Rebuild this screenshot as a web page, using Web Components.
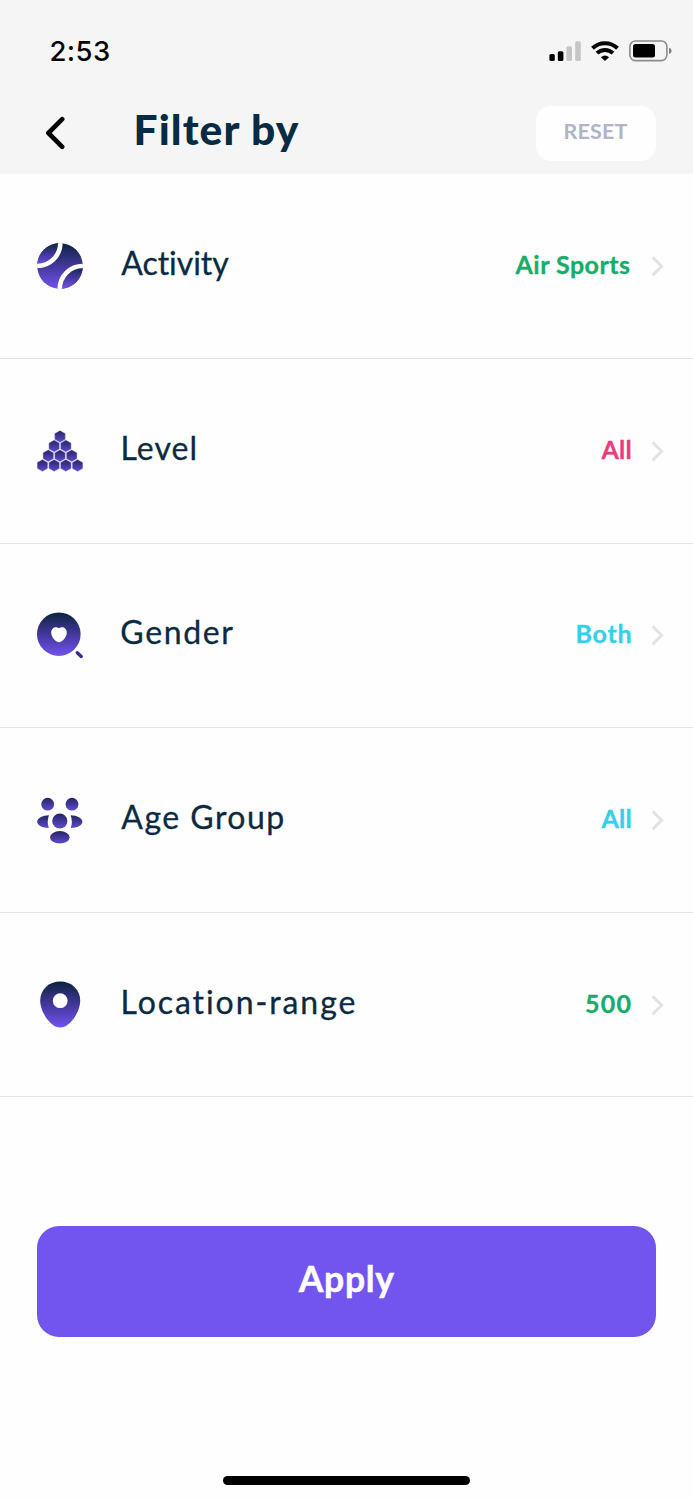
<!DOCTYPE html>
<html lang="en">
<head>
<meta charset="utf-8">
<title>Filter by</title>
<style>
  body {
    margin: 0;
    background: #fefefe;
    font-family: Lato, "Liberation Sans", sans-serif;
    color: #0b2a41;
  }
</style>
</head>
<body>
<filter-screen></filter-screen>

<script>
// Text tracked out to a given width, without side bearings
class FitText extends HTMLElement {
  constructor() {
    super();
    this.attachShadow({ mode: "open" });
    this.shadowRoot.innerHTML = `
    <style>
    :host { display: block; flex: none; white-space: nowrap; }
    span { display: block; }
    </style>
    <span><slot></slot></span>
    `;
  }

  connectedCallback() {
    const text = this.textContent;
    const target = parseFloat(this.getAttribute("width"));
    const style = getComputedStyle(this);
    const ctx = document.createElement("canvas").getContext("2d");
    ctx.font = `${style.fontWeight} ${style.fontSize} ${style.fontFamily}`;
    const m = ctx.measureText(text);
    const ink = m.actualBoundingBoxLeft + m.actualBoundingBoxRight;
    const span = this.shadowRoot.querySelector("span");
    span.style.letterSpacing = (target - ink) / (text.length - 1) + "px";
    span.style.marginLeft = m.actualBoundingBoxLeft + "px";
    this.style.width = target + "px";
  }
}

class StatusBar extends HTMLElement {
  constructor() {
    super();
    this.attachShadow({ mode: "open" });
    this.shadowRoot.innerHTML = `
    <style>
    :host {
      display: flex;
      align-items: center;
      justify-content: space-between;
      height: 102px;
      padding: 0 21px 0 50.5px;
      box-sizing: border-box;
      color: #050505;
    }
    fit-text { font: 500 27.5px/34px Inter, sans-serif; }
    .icons { display: flex; align-items: center; gap: 10px; }
    svg { display: block; }
    </style>
    <fit-text width="58.5">2:53</fit-text>
    <div class="icons">
      <svg width="32" height="20" viewBox="0 0 32 20">
        <rect x="0.4" y="13" width="5.4" height="7" rx="1.5"/>
        <rect x="8.8" y="10.3" width="5.6" height="9.7" rx="1.5"/>
        <rect x="17.4" y="5.2" width="5.6" height="14.8" rx="1.5" fill="#c6c6c6"/>
        <rect x="26.2" y="0.2" width="5.6" height="19.8" rx="1.5" fill="#c6c6c6"/>
      </svg>
      <svg width="28" height="20" viewBox="0 0 28 20" fill="none" stroke="#050505" stroke-width="4">
        <path d="M1.5 7.2A18 18 0 0 1 26.5 7.2"/>
        <path d="M6 12.2A11.4 11.4 0 0 1 22 12.2"/>
        <path d="M14 20L9.9 16.2A6.3 6.3 0 0 1 18.1 16.2Z" fill="#050505" stroke="none"/>
      </svg>
      <svg width="43" height="22" viewBox="0 0 43 22">
        <rect x="0.9" y="1" width="37" height="19.6" rx="5.5" fill="none" stroke="#8c8c8c" stroke-width="1.6"/>
        <rect x="4" y="4" width="22" height="13.6" rx="2.5"/>
        <path d="M40 7.8Q42.6 8.4 42.6 10.9T40 14Z" fill="#808080"/>
      </svg>
    </div>
    `;
  }
}

class NavHeader extends HTMLElement {
  constructor() {
    super();
    this.attachShadow({ mode: "open" });
    this.shadowRoot.innerHTML = `
    <style>
    :host {
      display: flex;
      align-items: center;
      height: 71.5px;
      padding: 0 37px 9.5px 45px;
      box-sizing: border-box;
    }
    svg { display: block; }
    .title {
      margin: 0 auto 8px 71.5px;
      font-size: 42.5px;
      font-weight: 900;
      line-height: 46px;
      color: #062b43;
    }
    .reset {
      display: flex;
      align-items: center;
      justify-content: center;
      width: 120px;
      height: 55px;
      padding: 0 0 4px;
      box-sizing: border-box;
      border: 0;
      border-radius: 15px;
      background: #fefefe;
      color: #b3b4c2;
      font-family: inherit;
    }
    .reset fit-text { font-size: 21.5px; font-weight: 700; line-height: 26px; }
    </style>
    <svg width="20" height="34" viewBox="0 0 20 34" fill="none" stroke="#050505" stroke-width="4.6" stroke-linecap="round" stroke-linejoin="round">
      <path d="M17.2 3.2L3.4 17L17.2 30.8"/>
    </svg>
    <fit-text class="title" width="163">${this.getAttribute("heading")}</fit-text>
    <button class="reset"><fit-text width="63">RESET</fit-text></button>
    `;
  }
}

const gradient = `
  <defs>
    <linearGradient id="g" x1="0" y1="0" x2="0" y2="1">
      <stop offset="0" stop-color="#0b2440"/>
      <stop offset="0.5" stop-color="#43379b"/>
      <stop offset="1" stop-color="#7253ee"/>
    </linearGradient>
    <linearGradient id="s" x1="0" y1="0" x2="0" y2="1">
      <stop offset="0" stop-color="#232562"/>
      <stop offset="1" stop-color="#6049d2"/>
    </linearGradient>
  </defs>`;

function pyramid() {
  let out = "";
  [9.4, 19.1, 28.8, 38.5].forEach((y, row) => {
    for (let i = 0; i <= row; i++) {
      const x = 23 + (i - row / 2) * 11.7;
      out += `<path d="M${x} ${y - 6}l5.3 3v6l-5.3 3l-5.3 -3v-6z"/>`;
    }
  });
  return `<g fill="url(#s)" stroke="#d3cdf3" stroke-width="0.4">${out}</g>`;
}

const icons = {
  ball: `
    <clipPath id="c"><circle cx="23" cy="23" r="23"/></clipPath>
    <g clip-path="url(#c)">
      <circle cx="23" cy="23" r="23" fill="url(#g)"/>
      <path d="M0 0H23A23 23 0 0 1 0 23Z" fill="url(#g)"/>
      <path d="M46 46H23A23 23 0 0 1 46 23Z" fill="url(#g)"/>
      <path d="M23.3 -2V0A23 23 0 0 1 0 23H-2M22.7 48V46A23 23 0 0 1 46 23H48" fill="none" stroke="#fefefe" stroke-width="4.6"/>
    </g>`,
  pyramid: pyramid(),
  lens: `
    <circle cx="21.8" cy="22.2" r="21.8" fill="url(#g)"/>
    <path d="M22 16.3C25 13.9 29.8 15.6 29.8 20.6C29.8 25.5 25 30.3 22 30.3S14.2 25.5 14.2 20.6C14.2 15.6 19 13.9 22 16.3Z" fill="#fefefe"/>
    <path d="M40.3 40.7L44.2 44.4" stroke="#3a2f8c" stroke-width="3.4" stroke-linecap="round"/>`,
  people: `
    <g fill="url(#s)">
      <circle cx="10.7" cy="7.2" r="6.4"/>
      <circle cx="35" cy="7.2" r="6.4"/>
      <circle cx="22.8" cy="24" r="7.6"/>
      <path d="M12 18.3C5.5 18.4 0.2 21.3 0.2 24.8S5.5 31 11.8 31Q9.6 24.5 12 18.3Z"/>
      <path d="M33.6 18.3C40.1 18.4 45.4 21.3 45.4 24.8S40.1 31 33.8 31Q36 24.5 33.6 18.3Z"/>
      <ellipse cx="22.8" cy="40.3" rx="9.8" ry="6.2"/>
    </g>`,
  pin: `
    <path d="M23.2 0.6C34.6 0.6 43.2 8.6 43.2 19.6C43.2 31.5 32.5 46.6 23.2 46.6S3.2 31.5 3.2 19.6C3.2 8.6 11.8 0.6 23.2 0.6Z" fill="url(#g)"/>
    <circle cx="23.2" cy="19.7" r="7.4" fill="#fefefe"/>`
};

class FilterRow extends HTMLElement {
  constructor() {
    super();
    this.attachShadow({ mode: "open" });
    const get = name => this.getAttribute(name);
    this.shadowRoot.innerHTML = `
    <style>
    :host {
      display: flex;
      align-items: center;
      height: 184.6px;
      padding: 0 29px 0 37px;
      box-sizing: border-box;
      border-bottom: 1px solid #e4e4e4;
    }
    svg { display: block; flex: none; }
    .label {
      margin: 0 auto 6px 38.3px;
      font-size: 32px;
      line-height: 38px;
      -webkit-text-stroke: 0.3px;
    }
    :host([label^="L"]) .label { margin-left: 39.5px; }
    .value {
      margin: 0 20.5px 4px 0;
      font-size: 25px;
      font-weight: 700;
      line-height: 30px;
      -webkit-text-stroke: 0.3px;
      color: ${get("color")};
    }
    </style>
    <svg width="46" height="47" viewBox="0 0 46 47">${gradient}${icons[get("icon")]}</svg>
    <fit-text class="label" width="${get("label-width")}">${get("label")}</fit-text>
    <fit-text class="value" width="${get("value-width")}">${get("value")}</fit-text>
    <svg width="13" height="20" viewBox="0 0 13 20" fill="none" stroke="#e2e2e2" stroke-width="3">
      <path d="M1.6 1.4L10.6 10.3L1.6 19.2"/>
    </svg>
    `;
  }
}

class ApplyButton extends HTMLElement {
  constructor() {
    super();
    this.attachShadow({ mode: "open" });
    this.shadowRoot.innerHTML = `
    <style>
    :host { display: block; }
    button {
      display: flex;
      align-items: center;
      justify-content: center;
      width: 100%;
      height: 110.5px;
      padding: 0 1px 5px 0;
      border: 0;
      border-radius: 22px;
      background: #7254ef;
      color: #fefefe;
      font-family: inherit;
    }
    fit-text { font-size: 35.5px; font-weight: 700; line-height: 42px; -webkit-text-stroke: 0.5px; }
    </style>
    <button><fit-text width="96.5">Apply</fit-text></button>
    `;
  }
}

class FilterScreen extends HTMLElement {
  constructor() {
    super();
    this.attachShadow({ mode: "open" });
    this.shadowRoot.innerHTML = `
    <style>
    :host {
      display: flex;
      flex-direction: column;
      width: 693px;
      height: 1500px;
    }
    header { background: #f5f5f6; }
    main { padding-top: 1px; }
    apply-button { margin: 129px 37px 0; }
    .home {
      width: 247px;
      height: 9px;
      margin: auto auto 15px;
      border-radius: 5px;
      background: #000;
    }
    </style>
    <header>
      <status-bar></status-bar>
      <nav-header heading="Filter by"></nav-header>
    </header>
    <main>
      <filter-row icon="ball" label="Activity" label-width="108.5" value="Air Sports" value-width="116" color="#16ac69"></filter-row>
      <filter-row icon="pyramid" label="Level" label-width="73" value="All" value-width="30" color="#e93d7b"></filter-row>
      <filter-row icon="lens" label="Gender" label-width="112" value="Both" value-width="53" color="#34cfe9"></filter-row>
      <filter-row icon="people" label="Age Group" label-width="162" value="All" value-width="30" color="#34cfe9"></filter-row>
      <filter-row icon="pin" label="Location-range" label-width="232.5" value="500" value-width="44.5" color="#16ac69"></filter-row>
    </main>
    <apply-button></apply-button>
    <div class="home"></div>
    `;
  }
}

customElements.define("fit-text", FitText);
customElements.define("status-bar", StatusBar);
customElements.define("nav-header", NavHeader);
customElements.define("filter-row", FilterRow);
customElements.define("apply-button", ApplyButton);
customElements.define("filter-screen", FilterScreen);
</script>
</body>
</html>
